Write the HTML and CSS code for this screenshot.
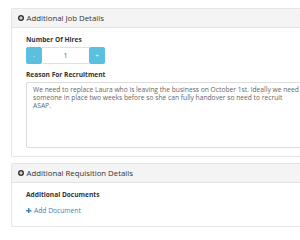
FILE: index.html
```html
<!DOCTYPE html>
<html>
<head>
<meta charset="utf-8">
<link rel="stylesheet" href="styles.css">
</head>
<body>
<div class="page">
  <div class="panel">
    <div class="panel-heading">
      <svg class="ico" viewBox="0 0 10 10"><circle cx="5" cy="5" r="5" fill="#333"/><rect x="2.2" y="4.1" width="5.6" height="1.8" fill="#fff"/><rect x="4.1" y="2.2" width="1.8" height="5.6" fill="#fff"/></svg>
      <span>Additional Job Details</span>
    </div>
    <div class="panel-body">
      <label class="lbl">Number Of Hires</label>
      <div class="spinner">
        <span class="btn">-</span>
        <span class="val">1</span>
        <span class="btn">+</span>
      </div>
      <label class="lbl lbl2">Reason For Recruitment</label>
      <div class="textarea">We need to replace Laura who is leaving the business on October 1st. Ideally we need someone in place two weeks before so she can fully handover so need to recruit ASAP.</div>
    </div>
  </div>
  <div class="panel panel2">
    <div class="panel-heading">
      <svg class="ico" viewBox="0 0 10 10"><circle cx="5" cy="5" r="5" fill="#333"/><rect x="2.2" y="4.1" width="5.6" height="1.8" fill="#fff"/><rect x="4.1" y="2.2" width="1.8" height="5.6" fill="#fff"/></svg>
      <span>Additional Requisition Details</span>
    </div>
    <div class="panel-body body2">
      <label class="lbl">Additional Documents</label>
      <a class="add"><svg class="plus" viewBox="0 0 8 8"><rect x="0" y="3" width="8" height="2" fill="#3a7fc4"/><rect x="3" y="0" width="2" height="8" fill="#3a7fc4"/></svg>Add Document</a>
    </div>
  </div>
</div>
</body>
</html>
```
FILE: styles.css
```css
html, body { margin: 0; padding: 0; background: #fff; }
body { font-family: "Open Sans", "Noto Sans", sans-serif; color: #333; overflow: hidden; width: 300px; height: 240px; }
.page { padding: 8px 0 0 11px; width: 340px; box-sizing: border-box; }
.panel { border: 1px solid #e6e6e6; border-right: none; border-radius: 2px 0 0 2px; }
.panel-heading { height: 18px; background: #f4f4f4; border-bottom: 1px solid #e3e3e3; display: flex; align-items: center; padding-left: 6px; font-size: 7.8px; color: #333; }
.ico { width: 6px; height: 6px; margin-right: 2.5px; }
.panel-body { padding: 7px 0 8px 14px; }
.lbl { display: block; font-weight: 700; font-size: 6.6px; line-height: 9px; color: #333; }
.spinner { display: flex; height: 17px; margin-top: 3px; width: 79px; }
.btn { width: 16px; background: #5bc0de; color: #fff; font-size: 6px; display: flex; align-items: center; justify-content: center; border-radius: 2px; }
.val { flex: 1; border-top: 1px solid #e0e0e0; border-bottom: 1px solid #e0e0e0; font-size: 6.5px; display: flex; align-items: center; justify-content: center; color: #555; }
.lbl2 { margin-top: 6px; }
.textarea { margin-top: 3px; border: 1px solid #dcdcdc; border-radius: 2px; width: 282px; height: 66px; padding: 3px 6px; font-size: 6.7px; line-height: 8px; color: #666; box-sizing: border-box; }
.panel2 { margin-top: 6px; }
.body2 { padding-top: 7px; padding-bottom: 11px; }
.add { display: flex; align-items: center; margin-top: 7px; font-size: 6.7px; line-height: 9px; color: #3a7fc4; }
.plus { width: 5.5px; height: 5.5px; margin-right: 2.5px; }
```
